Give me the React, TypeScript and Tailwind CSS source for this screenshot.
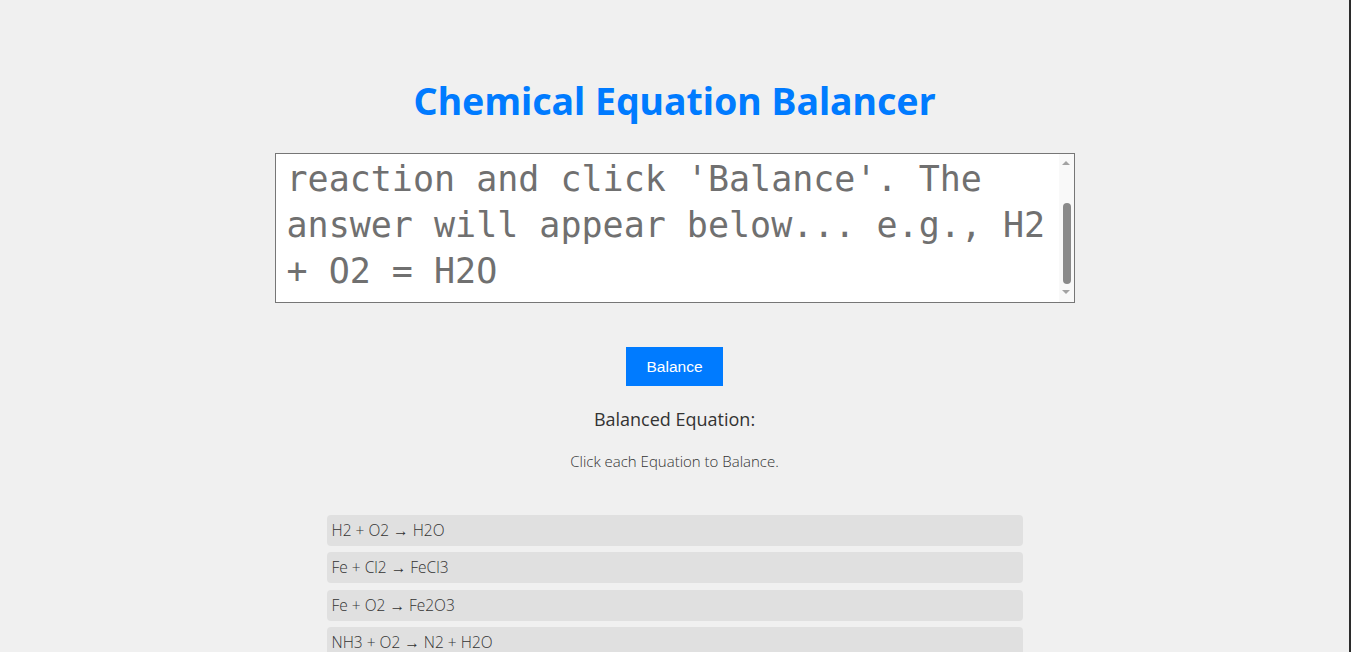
import React, { useEffect, useRef } from "react";

const equations = [
  "H2 + O2 → H2O",
  "Fe + Cl2 → FeCl3",
  "Fe + O2 → Fe2O3",
  "NH3 + O2 → N2 + H2O",
  "C3H8 + O2 → CO2 + H2O",
  "Al + HCl → AlCl3 + H2",
];

function ScrollBar() {
  return (
    <div className="pointer-events-none absolute top-[1px] right-[1px] bottom-[1px] flex w-[15px] flex-col items-center bg-[#f9f9f9] pt-[7px] pb-[8px]">
      <svg width="8" height="4" viewBox="0 0 8 4">
        <path d="M0 4 L4 0 L8 4 Z" fill="#a3a3a3" />
      </svg>
      <div className="mt-[38px] ml-[1px] h-[81px] w-[8px] rounded-full bg-[#8a8a8a]" />
      <div className="flex-1" />
      <svg width="8" height="4" viewBox="0 0 8 4">
        <path d="M0 0 L8 0 L4 4 Z" fill="#a3a3a3" />
      </svg>
    </div>
  );
}

export default function App() {
  const inputRef = useRef<HTMLTextAreaElement>(null);

  useEffect(() => {
    // the reference shows the box scrolled to the end
    if (inputRef.current) {
      inputRef.current.scrollTop = inputRef.current.scrollHeight;
    }
  }, []);

  return (
    <div className="flex h-[652px] overflow-hidden bg-[#f0f0f0]">
      <div className="flex flex-1 flex-col items-center pt-[76px]">
        <h1 className="shrink-0 font-['Noto_Sans',sans-serif] text-[37.5px] font-bold leading-[50px] text-[#007bff]">
          Chemical Equation Balancer
        </h1>
        <div className="relative mt-[27px] h-[150px] w-[800px] shrink-0">
          <textarea
            ref={inputRef}
            readOnly
            defaultValue="Enter the equation of a chemical reaction and click 'Balance'. The answer will appear below... e.g., H2 + O2 = H2O"
            className="h-full w-full resize-none overflow-y-scroll border border-[#767676] bg-white pt-[2px] pr-[26px] pb-[8px] pl-[11px] font-['DejaVu_Sans_Mono',monospace] text-[35px] leading-[46px] text-[#707070] outline-none [scrollbar-width:none]"
          />
          <ScrollBar />
        </div>
        <button
          type="button"
          className="mt-[44px] h-[39px] w-[97px] shrink-0 bg-[#007bff] font-['Liberation_Sans',sans-serif] text-[15.5px] text-white"
        >
          Balance
        </button>
        <h3 className="mt-[22px] shrink-0 font-['Open_Sans',sans-serif] text-[18px] leading-[22px] text-[#333]">
          Balanced Equation:
        </h3>
        <p className="mt-[21px] shrink-0 font-['Open_Sans',sans-serif] text-[15px] font-light leading-[20px] text-[#333]">
          Click each Equation to Balance.
        </p>
        <ul className="mt-[44px] flex w-[696px] shrink-0 flex-col gap-[6.4px]">
          {equations.map((eq) => (
            <li
              key={eq}
              className="h-[31px] cursor-pointer rounded-[4px] bg-[#e0e0e0] pl-[5px] font-['Open_Sans',sans-serif] text-[15.5px] font-light leading-[31px] text-[#333]"
            >
              {eq}
            </li>
          ))}
        </ul>
      </div>
      <div className="w-[2px] shrink-0 bg-[#2b2b2b]" />
    </div>
  );
}
